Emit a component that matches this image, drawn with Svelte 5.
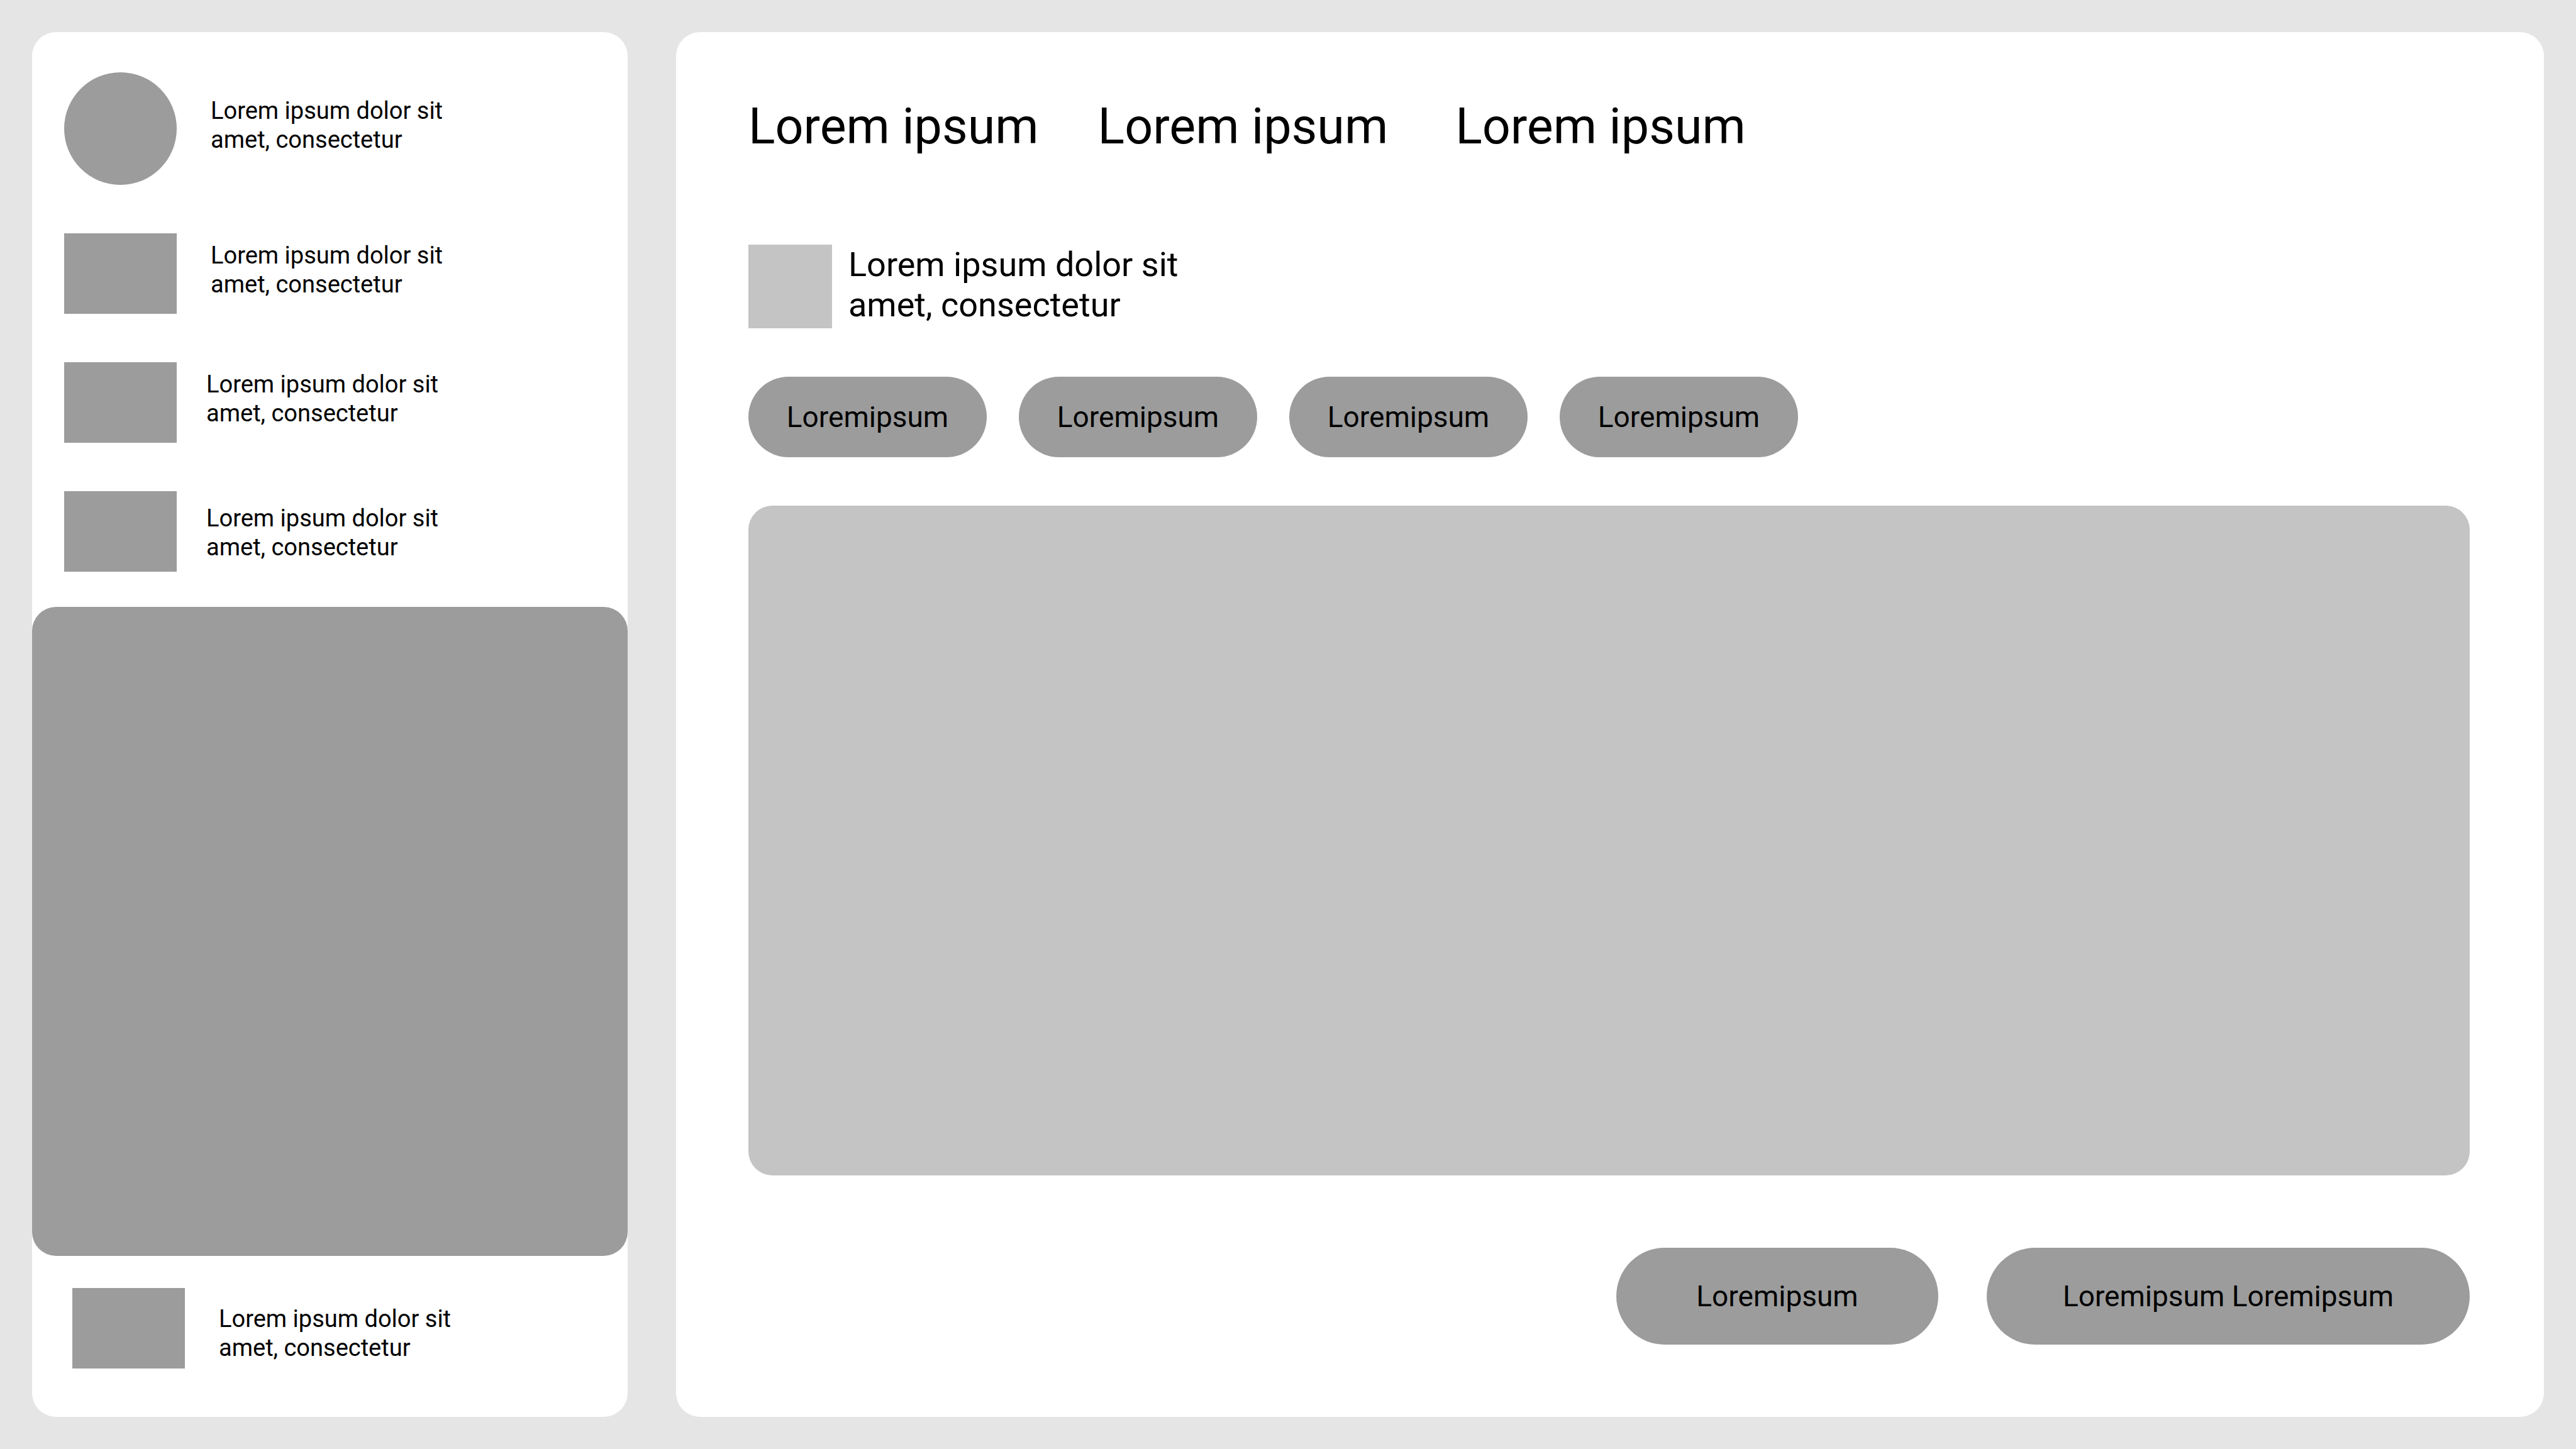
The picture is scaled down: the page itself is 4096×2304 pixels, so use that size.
<script>
  const text = 'Lorem ipsum dolor sit amet, consectetur';
  const entries = [
    { kind: 'profile' },
    { kind: 'regular' },
    { kind: 'regular near' },
    { kind: 'lower near' }
  ];
  const tabs = ['Lorem ipsum', 'Lorem ipsum', 'Lorem ipsum'];
  const filters = ['Loremipsum', 'Loremipsum', 'Loremipsum', 'Loremipsum'];
</script>

<div class="page">
  <aside class="panel sidebar">
    <ul class="entries">
      {#each entries as entry}
        <li>
          <a class="entry {entry.kind}" href="#entry">
            <span class="thumb"></span>
            <span class="label">{text}</span>
          </a>
        </li>
      {/each}
    </ul>
    <div class="feature"></div>
    <a class="entry footer" href="#footer">
      <span class="thumb"></span>
      <span class="label">{text}</span>
    </a>
  </aside>

  <main class="panel content">
    <nav class="tabs">
      {#each tabs as tab}
        <a href="#tab">{tab}</a>
      {/each}
    </nav>
    <header class="intro">
      <span class="badge"></span>
      <p>{text}</p>
    </header>
    <div class="filters">
      {#each filters as filter}
        <button type="button" class="pill">{filter}</button>
      {/each}
    </div>
    <section class="canvas"></section>
    <div class="actions">
      <button type="button" class="pill action">Loremipsum</button>
      <button type="button" class="pill action wide">Loremipsum Loremipsum</button>
    </div>
  </main>
</div>

<style>
  :global(body) {
    margin: 0;
    background: #e5e5e5;
  }

  .page {
    box-sizing: border-box;
    min-height: 100vh;
    padding: 51px;
    display: grid;
    grid-template-columns: minmax(0, 947fr) minmax(0, 2970fr);
    gap: 77px;
    background: #e5e5e5;
    color: #000;
    font-family: Roboto, 'Liberation Sans', sans-serif;
  }

  .panel {
    display: flex;
    flex-direction: column;
    border-radius: 38px;
    background: #fff;
  }

  a {
    color: inherit;
    text-decoration: none;
  }

  .sidebar {
    padding: 64px 0 77px;
  }

  .entries {
    display: flex;
    flex-direction: column;
    gap: 77px;
    margin: 0 0 56px;
    padding: 0 51px;
    list-style: none;
  }

  .entry {
    display: flex;
    align-items: flex-start;
    gap: 54px;
  }

  .thumb {
    flex: none;
    width: 179px;
    height: 128px;
    background: #9c9c9c;
  }

  .label {
    max-width: 400px;
    padding-top: 12px;
    font-size: 38px;
    line-height: 46px;
  }

  .near {
    gap: 47px;
  }

  .lower .label {
    padding-top: 20px;
  }

  .profile .thumb {
    height: 179px;
    border-radius: 50%;
  }

  .profile .label {
    padding-top: 38px;
  }

  .feature {
    flex: 1;
    min-height: 256px;
    border-radius: 38px;
    background: #9c9c9c;
  }

  .footer {
    margin-top: 51px;
    padding: 0 64px;
  }

  .footer .label {
    padding-top: 26px;
  }

  .content {
    padding: 103px 118px 115px 115px;
  }

  .tabs {
    display: flex;
    flex-wrap: wrap;
    gap: 94px;
    margin-bottom: 141px;
    font-size: 79px;
    line-height: 94px;
  }

  .tabs a:last-child {
    margin-left: 13px;
  }

  .intro {
    display: flex;
    align-items: flex-start;
    gap: 26px;
    margin-bottom: 77px;
  }

  .badge {
    flex: none;
    width: 133px;
    height: 133px;
    background: #c4c4c4;
  }

  .intro p {
    max-width: 560px;
    margin: 0;
    font-size: 54px;
    line-height: 64px;
  }

  .filters {
    display: flex;
    flex-wrap: wrap;
    gap: 51px;
    margin-bottom: 77px;
  }

  .pill {
    min-width: 379px;
    height: 128px;
    padding: 0 51px;
    border: 0;
    border-radius: 77px;
    background: #9c9c9c;
    color: inherit;
    font-family: inherit;
    font-size: 46px;
    line-height: 54px;
    cursor: pointer;
  }

  .canvas {
    flex: 1;
    min-height: 256px;
    border-radius: 38px;
    background: #c4c4c4;
  }

  .actions {
    display: flex;
    flex-wrap: wrap;
    justify-content: flex-end;
    gap: 77px;
    margin-top: 115px;
  }

  .action {
    min-width: 512px;
    height: 154px;
  }

  .wide {
    min-width: 768px;
  }
</style>
